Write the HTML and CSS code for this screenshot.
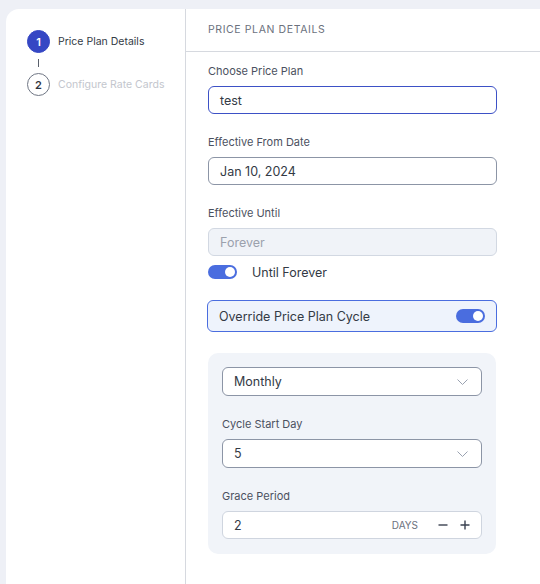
FILE: index.html
```html
<!DOCTYPE html>
<html>
<head>
<meta charset="utf-8">
<link rel="stylesheet" href="styles.css">
</head>
<body>
<div class="app">
  <div class="card">
    <aside class="sidebar">
      <div class="step active">
        <span class="step-num">1</span>
        <span class="step-label">Price Plan Details</span>
      </div>
      <div class="step-line"></div>
      <div class="step">
        <span class="step-num">2</span>
        <span class="step-label">Configure Rate Cards</span>
      </div>
    </aside>
    <main class="main">
      <div class="main-header">PRICE PLAN DETAILS</div>
      <div class="form">
        <div class="field">
          <div class="label">Choose Price Plan</div>
          <div class="input focused">test</div>
        </div>
        <div class="field">
          <div class="label">Effective From Date</div>
          <div class="input">Jan 10, 2024</div>
        </div>
        <div class="field tight">
          <div class="label">Effective Until</div>
          <div class="input disabled">Forever</div>
        </div>
        <div class="toggle-row">
          <span class="toggle"><span class="knob"></span></span>
          <span class="toggle-text">Until Forever</span>
        </div>
        <div class="override">
          <span>Override Price Plan Cycle</span>
          <span class="toggle"><span class="knob"></span></span>
        </div>
        <div class="panel">
          <div class="field">
            <div class="input select">
              <span>Monthly</span>
              <svg class="chev" width="11" height="6" viewBox="0 0 11 6"><path d="M0.5 0.5l5 5 5-5" fill="none" stroke="#9aa2b1" stroke-width="1"/></svg>
            </div>
          </div>
          <div class="field">
            <div class="label">Cycle Start Day</div>
            <div class="input select">
              <span>5</span>
              <svg class="chev" width="11" height="6" viewBox="0 0 11 6"><path d="M0.5 0.5l5 5 5-5" fill="none" stroke="#9aa2b1" stroke-width="1"/></svg>
            </div>
          </div>
          <div class="field last">
            <div class="label">Grace Period</div>
            <div class="input light number">
              <span class="num">2</span>
              <span class="unit">DAYS</span>
              <svg class="stepper" width="12" height="12" viewBox="0 0 12 12"><path d="M1.5 6h9" stroke="#3a4150" stroke-width="1.4"/></svg>
              <svg class="stepper" width="12" height="12" viewBox="0 0 12 12"><path d="M1.5 6h9M6 1.5v9" stroke="#3a4150" stroke-width="1.4"/></svg>
            </div>
          </div>
        </div>
      </div>
    </main>
  </div>
</div>
</body>
</html>
```

FILE: styles.css
```css
* { box-sizing: border-box; }
html, body { margin: 0; padding: 0; }
body {
  background: #eef0f6;
  font-family: Inter, "Noto Sans", sans-serif;
  color: #333a45;
  width: 540px;
  height: 584px;
  overflow: hidden;
}
.app {
  padding: 9px 0 0 6px;
}
.card {
  display: flex;
  background: #fff;
  border-top-left-radius: 13px;
  min-height: 580px;
}
.sidebar {
  width: 180px;
  border-right: 1px solid #d6d9df;
  padding: 21px 0 0 21px;
  flex-shrink: 0;
}
.step {
  display: flex;
  align-items: center;
  gap: 8px;
}
.step-num {
  width: 23px;
  height: 23px;
  border-radius: 50%;
  border: 1.3px solid #6f7684;
  display: flex;
  align-items: center;
  justify-content: center;
  font-size: 11px;
  font-weight: 600;
  color: #2f3440;
  background: #fff;
}
.step.active .step-num {
  background: #3547c4;
  border-color: #3547c4;
  color: #fff;
}
.step-label {
  font-size: 10.5px;
  color: #c3c6cd;
}
.step.active .step-label {
  color: #333a45;
}
.step-line {
  width: 1px;
  height: 8px;
  background: #5a606c;
  margin: 6px 0 6px 11px;
}
.main {
  flex: 1;
}
.main-header {
  height: 43px;
  border-bottom: 1px solid #d6d9df;
  padding: 0 0 2px 22px;
  display: flex;
  align-items: center;
  font-size: 10.5px;
  letter-spacing: 0.6px;
  color: #6b717d;
}
.form {
  padding: 12px 0 0 22px;
  width: 311px;
}
.field {
  margin-bottom: 21px;
}
.field.tight { margin-bottom: 9px; }
.field.last { margin-bottom: 0; }
.label {
  font-size: 11px;
  line-height: 14px;
  color: #4b5160;
  margin-bottom: 8px;
}
.input {
  height: 28px;
  border: 1px solid #8c95a6;
  border-radius: 6px;
  display: flex;
  align-items: center;
  padding: 0 11px;
  font-size: 12.5px;
  color: #333a45;
  background: #fff;
}
.input.focused { border-color: #3d51c6; }
.input.disabled {
  background: #f0f3f8;
  border-color: #d2d8e2;
  color: #9ba1ad;
}
.input.light { border-color: #cfd5df; }
.input.select { justify-content: space-between; padding-right: 13px; height: 29px; }
.toggle-row {
  display: flex;
  align-items: center;
  gap: 15px;
  height: 14px;
  margin-bottom: 21px;
}
.toggle {
  width: 29px;
  height: 14px;
  border-radius: 7px;
  background: #4a6ddf;
  display: flex;
  align-items: center;
  justify-content: flex-end;
  padding-right: 2px;
}
.knob {
  width: 10px;
  height: 10px;
  border-radius: 50%;
  background: #fff;
}
.toggle-text {
  font-size: 12.5px;
  color: #333a45;
}
.override {
  height: 32px;
  margin-left: -1px;
  width: 290px;
  border: 1px solid #4a6ddf;
  border-radius: 6px;
  background: #eef3fc;
  display: flex;
  align-items: center;
  justify-content: space-between;
  padding: 0 11px 0 11px;
  font-size: 12.5px;
  color: #333a45;
  margin-bottom: 21px;
}
.panel {
  width: 288px;
  background: #f1f4f9;
  border-radius: 10px;
  padding: 14px 14px 15px 14px;
}
.number { padding-right: 10px; }
.num { flex: 1; }
.unit {
  font-size: 10px;
  color: #6b717d;
  margin-right: 9px;
}
.stepper { margin-left: 10px; }
```
